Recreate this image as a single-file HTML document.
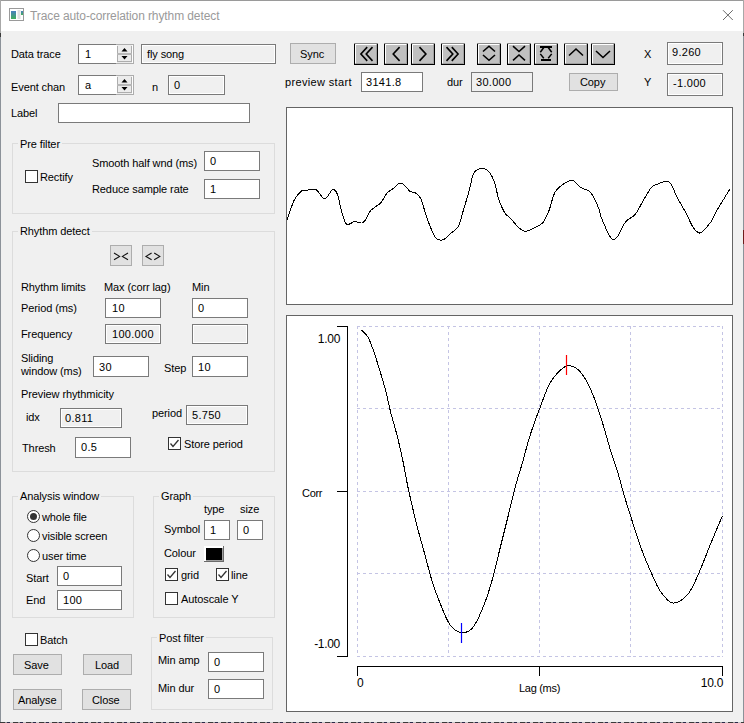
<!DOCTYPE html>
<html><head><meta charset="utf-8">
<style>
*{margin:0;padding:0;box-sizing:border-box}
html,body{width:744px;height:723px;overflow:hidden;background:#f0f0f0}
body{position:relative;font-family:"Liberation Sans",sans-serif;font-size:11px;color:#000}
.a{position:absolute}
.t{position:absolute;white-space:nowrap;line-height:12px;letter-spacing:-0.1px}
.ed{position:absolute;background:#fff;border:1px solid #7a7a7a}
.ro{position:absolute;background:#f0f0f0;border:1px solid #7a7a7a;box-shadow:inset 0 0 0 1px #fff}
.btn{position:absolute;background:#e1e1e1;border:1px solid #adadad}
.cb3{position:absolute;background:#c0c0c0;border:1px solid #000;border-top-color:#a0a0a0;box-shadow:inset 1px 1px 0 #fff}
.grp{position:absolute;border:1px solid #dcdcdc}
.cb{position:absolute;width:13px;height:13px;border:1px solid #333;background:#fff}
.rb{position:absolute;width:13px;height:13px;border:1px solid #333;background:#fff;border-radius:50%}
.lbl{position:absolute;background:#f0f0f0;padding:0 2px}
svg{position:absolute;left:0;top:0}
.g{letter-spacing:-0.3px}
.n{letter-spacing:0.3px}
.g2{font-size:12px;letter-spacing:-0.3px}
</style></head><body>
<!-- window frame -->
<div class="a" style="left:0;top:0;width:744px;height:1px;background:#9a9a9a"></div>
<div class="a" style="left:0;top:0;width:1px;height:723px;background:linear-gradient(#a8a8a8 0 33px,#3a3a3a 33px 37px,#8c9299 37px)"></div>
<div class="a" style="left:743px;top:0;width:1px;height:723px;background:linear-gradient(#a8a8a8 0 33px,#3a3a3a 33px 36px,#8c9299 36px)"></div>
<div class="a" style="left:743px;top:230px;width:1px;height:14px;background:#6e1c1c"></div>
<div class="a" style="left:1px;top:1px;width:742px;height:30px;background:#fff"></div>
<div class="a" style="left:0;top:722px;width:744px;height:1px;background:repeating-linear-gradient(90deg,#3a3a3a 0 5px,#9a9a9a 5px 7px,#2a2a4a 7px 10px,#c8c8c8 10px 13px)"></div>
<!-- title -->
<svg width="30" height="30" style="left:0;top:0">
 <defs><linearGradient id="ig" x1="0" y1="0" x2="0" y2="1"><stop offset="0" stop-color="#4a7fc0"/><stop offset="1" stop-color="#3fae5a"/></linearGradient></defs>
 <rect x="9.5" y="8.5" width="14" height="12" fill="#fff" stroke="#9a9a9a"/>
 <rect x="11" y="11" width="5" height="8" fill="url(#ig)"/>
 <rect x="17.5" y="10" width="3" height="9" fill="#e0e0e0"/>
 <rect x="21" y="11" width="2" height="4" fill="url(#ig)"/>
</svg>
<div class="t" style="left:30px;top:10px;font-size:12px;color:#9a9a9a;letter-spacing:-0.1px">Trace auto-correlation rhythm detect</div>
<svg width="20" height="20" style="left:718px;top:5px"><path d="M5 5.2L14.8 15M14.8 5.2L5 15" stroke="#6a6a6a" stroke-width="1"/></svg>

<!-- row 1 -->
<div class="t" style="left:11px;top:48px">Data trace</div>
<svg width="60" height="22" style="left:76px;top:42px" shape-rendering="crispEdges">
<rect x="2.5" y="2.5" width="55" height="19" fill="#fff" stroke="#7a7a7a"/>
<path d="M40 2.5H57.5V21.5H40" fill="none" stroke="#adadad"/>
<rect x="41" y="3" width="15" height="18" fill="#ececec"/>
<path d="M41.5 4V20M55.5 4V20M41 19.5H56" fill="none" stroke="#adadad"/>
<rect x="41" y="11" width="15" height="2" fill="#b8b8b8"/>
<path d="M45.5 9.5L48.5 6L51.5 9.5Z M45.5 14L48.5 17.5L51.5 14Z" fill="#000" shape-rendering="auto"/>
</svg>
<div class="t n" style="left:85px;top:48px">1</div>
<div class="ro" style="left:141px;top:44px;width:135px;height:20px"></div>
<div class="t" style="left:147px;top:48px">fly song</div>
<div class="btn" style="left:290px;top:43px;width:46px;height:21px"></div>
<div class="t" style="left:300px;top:48px">Sync</div>

<!-- row 2 -->
<div class="t" style="left:11px;top:81px">Event chan</div>
<svg width="60" height="22" style="left:76px;top:73px" shape-rendering="crispEdges">
<rect x="2.5" y="2.5" width="55" height="19" fill="#fff" stroke="#7a7a7a"/>
<path d="M40 2.5H57.5V21.5H40" fill="none" stroke="#adadad"/>
<rect x="41" y="3" width="15" height="18" fill="#ececec"/>
<path d="M41.5 4V20M55.5 4V20M41 19.5H56" fill="none" stroke="#adadad"/>
<rect x="41" y="11" width="15" height="2" fill="#b8b8b8"/>
<path d="M45.5 9.5L48.5 6L51.5 9.5Z M45.5 14L48.5 17.5L51.5 14Z" fill="#000" shape-rendering="auto"/>
</svg>
<div class="t" style="left:85px;top:79px">a</div>
<div class="t" style="left:152px;top:81px">n</div>
<div class="ro" style="left:168px;top:75px;width:57px;height:20px"></div>
<div class="t n" style="left:174px;top:79px">0</div>
<div class="t" style="left:285px;top:76px;letter-spacing:0.35px">preview start</div>
<div class="ed" style="left:361px;top:72px;width:62px;height:20px"></div>
<div class="t n" style="left:366px;top:76px">3141.8</div>
<div class="t" style="left:447px;top:76px">dur</div>
<div class="ro" style="left:471px;top:72px;width:62px;height:20px;box-shadow:none"></div>
<div class="t n" style="left:476px;top:76px">30.000</div>
<div class="btn" style="left:569px;top:73px;width:49px;height:18px"></div>
<div class="t" style="left:580px;top:76px">Copy</div>

<!-- row 3 -->
<div class="t" style="left:11px;top:107px">Label</div>
<div class="ed" style="left:58px;top:103px;width:192px;height:20px"></div>

<!-- X Y -->
<div class="t" style="left:644px;top:48px">X</div>
<div class="ro" style="left:667px;top:42px;width:56px;height:23px"></div>
<div class="t n" style="left:672px;top:46px">9.260</div>
<div class="t" style="left:644px;top:76px">Y</div>
<div class="ro" style="left:667px;top:73px;width:56px;height:23px"></div>
<div class="t n" style="left:673px;top:77px">-1.000</div>

<!-- nav buttons -->

<svg width="300" height="30" style="left:350px;top:40px">
<g transform="translate(4,3)"><rect x="0.5" y="0.5" width="23" height="21" fill="#c0c0c0" stroke="#000"/><path d="M0 0.5H24" stroke="#8a8a8a"/><path d="M1.5 20V1.5H22" fill="none" stroke="#fff"/><path d="M2 20.5H22.5V2" fill="none" stroke="#a0a0a0"/><path d="M13.2 4.1L6.9 11L13.2 17.9M18.5 4.1L12.2 11L18.5 17.9" fill="none" stroke="#000" stroke-width="1.6"/></g>
<g transform="translate(34,3)"><rect x="0.5" y="0.5" width="23" height="21" fill="#c0c0c0" stroke="#000"/><path d="M0 0.5H24" stroke="#8a8a8a"/><path d="M1.5 20V1.5H22" fill="none" stroke="#fff"/><path d="M2 20.5H22.5V2" fill="none" stroke="#a0a0a0"/><path d="M15.6 4.1L9.2 11L15.6 17.9" fill="none" stroke="#000" stroke-width="1.6"/></g>
<g transform="translate(61,3)"><rect x="0.5" y="0.5" width="23" height="21" fill="#c0c0c0" stroke="#000"/><path d="M0 0.5H24" stroke="#8a8a8a"/><path d="M1.5 20V1.5H22" fill="none" stroke="#fff"/><path d="M2 20.5H22.5V2" fill="none" stroke="#a0a0a0"/><path d="M8.5 4.1L14.9 11L8.5 17.9" fill="none" stroke="#000" stroke-width="1.6"/></g>
<g transform="translate(91,3)"><rect x="0.5" y="0.5" width="23" height="21" fill="#c0c0c0" stroke="#000"/><path d="M0 0.5H24" stroke="#8a8a8a"/><path d="M1.5 20V1.5H22" fill="none" stroke="#fff"/><path d="M2 20.5H22.5V2" fill="none" stroke="#a0a0a0"/><path d="M5.5 4.1L11.8 11L5.5 17.9M10.8 4.1L17.1 11L10.8 17.9" fill="none" stroke="#000" stroke-width="1.6"/></g>
<g transform="translate(127,3)"><rect x="0.5" y="0.5" width="23" height="21" fill="#c0c0c0" stroke="#000"/><path d="M0 0.5H24" stroke="#8a8a8a"/><path d="M1.5 20V1.5H22" fill="none" stroke="#fff"/><path d="M2 20.5H22.5V2" fill="none" stroke="#a0a0a0"/><path d="M6 8.5L12 3.2L18 8.5M6 12L12 17.3L18 12" fill="none" stroke="#000" stroke-width="1.6"/></g>
<g transform="translate(157,3)"><rect x="0.5" y="0.5" width="23" height="21" fill="#c0c0c0" stroke="#000"/><path d="M0 0.5H24" stroke="#8a8a8a"/><path d="M1.5 20V1.5H22" fill="none" stroke="#fff"/><path d="M2 20.5H22.5V2" fill="none" stroke="#a0a0a0"/><path d="M6 3.2L12 8.5L18 3.2M6 17.3L12 12L18 17.3" fill="none" stroke="#000" stroke-width="1.6"/></g>
<g transform="translate(184,3)"><rect x="0.5" y="0.5" width="23" height="21" fill="#c0c0c0" stroke="#000"/><path d="M0 0.5H24" stroke="#8a8a8a"/><path d="M1.5 20V1.5H22" fill="none" stroke="#fff"/><path d="M2 20.5H22.5V2" fill="none" stroke="#a0a0a0"/><path d="M9.8 4.5L6.3 9.3M14.2 4.5L17.7 9.3M6.3 10.9L9.8 15.2M17.7 10.9L14.2 15.2" fill="none" stroke="#000" stroke-width="1.5"/><rect x="6" y="3" width="12" height="2" fill="#000"/><rect x="7" y="16" width="10" height="2" fill="#000"/></g>
<g transform="translate(214,3)"><rect x="0.5" y="0.5" width="23" height="21" fill="#c0c0c0" stroke="#000"/><path d="M0 0.5H24" stroke="#8a8a8a"/><path d="M1.5 20V1.5H22" fill="none" stroke="#fff"/><path d="M2 20.5H22.5V2" fill="none" stroke="#a0a0a0"/><path d="M5 12.5L12 6L19 12.5" fill="none" stroke="#000" stroke-width="1.6"/></g>
<g transform="translate(241,3)"><rect x="0.5" y="0.5" width="23" height="21" fill="#c0c0c0" stroke="#000"/><path d="M0 0.5H24" stroke="#8a8a8a"/><path d="M1.5 20V1.5H22" fill="none" stroke="#fff"/><path d="M2 20.5H22.5V2" fill="none" stroke="#a0a0a0"/><path d="M5 8L12 14.5L19 8" fill="none" stroke="#000" stroke-width="1.6"/></g>
</svg>

<!-- Pre filter -->
<div class="grp" style="left:12px;top:143px;width:263px;height:71px"></div>
<div class="t lbl" style="left:18px;top:138px">Pre filter</div>
<div class="cb" style="left:25px;top:170px"></div>
<div class="t" style="left:40px;top:171px">Rectify</div>
<div class="t" style="left:92px;top:157px">Smooth half wnd (ms)</div>
<div class="ed" style="left:204px;top:151px;width:56px;height:20px"></div>
<div class="t n" style="left:210px;top:155px">0</div>
<div class="t" style="left:92px;top:183px">Reduce sample rate</div>
<div class="ed" style="left:204px;top:179px;width:56px;height:20px"></div>
<div class="t n" style="left:210px;top:183px">1</div>

<!-- Rhythm detect -->
<div class="grp" style="left:12px;top:231px;width:263px;height:241px"></div>
<div class="t lbl" style="left:18px;top:225px">Rhythm detect</div>
<div class="btn" style="left:110px;top:245px;width:22px;height:21px"></div>
<svg width="22" height="21" style="left:110px;top:245px"><path d="M4 8L9.6 11.4L4 14.8M18 8L12.4 11.4L18 14.8" fill="none" stroke="#111" stroke-width="1.1"/></svg>
<div class="btn" style="left:142px;top:245px;width:22px;height:21px"></div>
<svg width="22" height="21" style="left:142px;top:245px"><path d="M9.6 8L4 11.4L9.6 14.8M12.2 8L17.8 11.4L12.2 14.8" fill="none" stroke="#111" stroke-width="1.1"/></svg>
<div class="t" style="left:21px;top:281px">Rhythm limits</div>
<div class="t" style="left:104px;top:281px">Max (corr lag)</div>
<div class="t" style="left:192px;top:281px">Min</div>
<div class="t" style="left:21px;top:302px">Period (ms)</div>
<div class="ed" style="left:105px;top:298px;width:56px;height:20px"></div>
<div class="t n" style="left:112px;top:302px">10</div>
<div class="ed" style="left:192px;top:298px;width:56px;height:20px"></div>
<div class="t n" style="left:198px;top:302px">0</div>
<div class="t" style="left:21px;top:328px">Frequency</div>
<div class="ro" style="left:105px;top:324px;width:56px;height:20px"></div>
<div class="t n" style="left:112px;top:328px">100.000</div>
<div class="ro" style="left:192px;top:324px;width:56px;height:20px"></div>
<div class="t" style="left:21px;top:352px">Sliding</div>
<div class="t" style="left:21px;top:365px">window (ms)</div>
<div class="ed" style="left:93px;top:356px;width:56px;height:21px"></div>
<div class="t n" style="left:99px;top:361px">30</div>
<div class="t" style="left:164px;top:362px">Step</div>
<div class="ed" style="left:192px;top:356px;width:56px;height:21px"></div>
<div class="t n" style="left:198px;top:361px">10</div>
<div class="t" style="left:21px;top:388px">Preview rhythmicity</div>
<div class="t" style="left:26px;top:411px">idx</div>
<div class="ro" style="left:60px;top:408px;width:62px;height:20px"></div>
<div class="t n" style="left:65px;top:412px">0.811</div>
<div class="t" style="left:152px;top:407px">period</div>
<div class="ro" style="left:186px;top:405px;width:62px;height:20px"></div>
<div class="t n" style="left:192px;top:409px">5.750</div>
<div class="t" style="left:22px;top:442px">Thresh</div>
<div class="ed" style="left:75px;top:437px;width:56px;height:21px"></div>
<div class="t n" style="left:81px;top:441px">0.5</div>
<div class="cb" style="left:168px;top:437px"></div>
<svg width="13" height="13" style="left:168px;top:437px"><path d="M2.5 6.5L5 9.5L10.5 3" fill="none" stroke="#333" stroke-width="1.3"/></svg>
<div class="t" style="left:184px;top:438px">Store period</div>

<!-- Analysis window -->
<div class="grp" style="left:12px;top:496px;width:122px;height:122px"></div>
<div class="t lbl" style="left:18px;top:490px">Analysis window</div>
<div class="rb" style="left:27px;top:510px"></div>
<div class="a" style="left:30px;top:513px;width:7px;height:7px;border-radius:50%;background:#333"></div>
<div class="t" style="left:42px;top:511px">whole file</div>
<div class="rb" style="left:27px;top:529px"></div>
<div class="t" style="left:42px;top:530px">visible screen</div>
<div class="rb" style="left:27px;top:549px"></div>
<div class="t" style="left:42px;top:550px">user time</div>
<div class="t" style="left:26px;top:572px">Start</div>
<div class="ed" style="left:57px;top:566px;width:65px;height:20px"></div>
<div class="t n" style="left:63px;top:570px">0</div>
<div class="t" style="left:26px;top:594px">End</div>
<div class="ed" style="left:57px;top:590px;width:65px;height:20px"></div>
<div class="t n" style="left:63px;top:594px">100</div>

<!-- Graph -->
<div class="grp" style="left:153px;top:496px;width:122px;height:122px"></div>
<div class="t lbl" style="left:159px;top:490px">Graph</div>
<div class="t" style="left:204px;top:503px">type</div>
<div class="t" style="left:240px;top:503px">size</div>
<div class="t" style="left:164px;top:523px">Symbol</div>
<div class="ed" style="left:204px;top:520px;width:26px;height:20px"></div>
<div class="t n" style="left:210px;top:524px">1</div>
<div class="ed" style="left:237px;top:520px;width:26px;height:20px"></div>
<div class="t n" style="left:243px;top:524px">0</div>
<div class="t" style="left:164px;top:547px">Colour</div>
<svg width="20" height="16" style="left:204px;top:546px" shape-rendering="crispEdges"><rect x="0" y="0" width="20" height="16" fill="#fff"/><rect x="0" y="15" width="20" height="1" fill="#6a6a6a"/><rect x="19" y="0" width="1" height="16" fill="#6a6a6a"/><rect x="2" y="14" width="17" height="1" fill="#a0a0a0"/><rect x="18" y="2" width="1" height="13" fill="#a0a0a0"/><rect x="2" y="2" width="16" height="12" fill="#000"/></svg>
<div class="cb" style="left:165px;top:568px"></div>
<svg width="13" height="13" style="left:165px;top:568px"><path d="M2.5 6.5L5 9.5L10.5 3" fill="none" stroke="#333" stroke-width="1.3"/></svg>
<div class="t" style="left:181px;top:569px">grid</div>
<div class="cb" style="left:216px;top:568px"></div>
<svg width="13" height="13" style="left:216px;top:568px"><path d="M2.5 6.5L5 9.5L10.5 3" fill="none" stroke="#333" stroke-width="1.3"/></svg>
<div class="t" style="left:231px;top:569px">line</div>
<div class="cb" style="left:165px;top:592px"></div>
<div class="t" style="left:181px;top:593px">Autoscale Y</div>

<!-- bottom -->
<div class="cb" style="left:25px;top:633px"></div>
<div class="t" style="left:40px;top:634px">Batch</div>
<div class="btn" style="left:13px;top:654px;width:49px;height:21px"></div>
<div class="t" style="left:24px;top:659px">Save</div>
<div class="btn" style="left:83px;top:654px;width:49px;height:21px"></div>
<div class="t" style="left:95px;top:659px">Load</div>
<div class="btn" style="left:13px;top:689px;width:49px;height:21px"></div>
<div class="t" style="left:18px;top:694px">Analyse</div>
<div class="btn" style="left:82px;top:689px;width:49px;height:21px"></div>
<div class="t" style="left:92px;top:694px">Close</div>

<!-- Post filter -->
<div class="grp" style="left:151px;top:637px;width:122px;height:73px"></div>
<div class="t lbl" style="left:157px;top:632px">Post filter</div>
<div class="t" style="left:158px;top:654px">Min amp</div>
<div class="ed" style="left:208px;top:652px;width:56px;height:20px"></div>
<div class="t n" style="left:214px;top:656px">0</div>
<div class="t" style="left:158px;top:682px">Min dur</div>
<div class="ed" style="left:208px;top:679px;width:56px;height:20px"></div>
<div class="t n" style="left:214px;top:683px">0</div>

<!-- graphs -->
<svg width="744" height="723" style="left:0;top:0">
<rect x="286.5" y="107.5" width="446" height="197" fill="#fff" stroke="#646464"/>
<rect x="286.5" y="315.5" width="446" height="396" fill="#fff" stroke="#646464"/>
<path d="M287.0 219.6C288.2 216.4 291.8 205.1 294.1 200.4C296.5 195.7 299.1 193.0 301.1 191.3C303.1 189.6 303.9 190.6 306.2 190.3C308.5 190.0 313.0 188.8 315.2 189.3C317.4 189.8 317.8 191.7 319.3 193.3C320.8 194.9 322.8 198.5 324.3 198.8C325.8 199.2 326.9 197.0 328.3 195.4C329.7 193.8 331.3 189.5 332.8 189.3C334.3 189.1 336.0 190.9 337.4 194.4C338.8 197.9 339.9 205.5 341.4 210.5C342.9 215.5 344.3 222.3 346.5 224.2C348.7 226.0 352.0 221.8 354.5 221.6C357.0 221.4 359.8 223.3 361.6 223.0C363.5 222.7 364.1 221.7 365.6 219.6C367.1 217.5 368.2 213.3 370.7 210.5C373.2 207.7 378.1 205.7 380.8 202.8C383.5 199.9 384.5 195.9 386.8 193.3C389.1 190.7 392.9 189.0 394.9 187.3C396.9 185.6 397.6 183.9 398.9 183.3C400.2 182.7 401.0 182.6 402.9 183.9C404.8 185.2 408.0 189.8 410.0 191.3C412.0 192.8 413.2 191.5 415.0 192.7C416.8 193.9 418.7 194.1 420.7 198.4C422.7 202.7 424.7 212.1 427.1 218.5C429.5 224.9 432.9 233.5 435.2 237.1C437.5 240.7 439.5 239.8 441.1 240.1C442.8 240.4 443.6 239.8 445.1 238.7C446.6 237.6 448.0 235.7 450.2 233.7C452.4 231.7 456.0 230.5 458.2 226.6C460.4 222.7 461.4 216.6 463.3 210.5C465.2 204.4 467.6 196.4 469.3 190.3C471.0 184.2 471.5 177.8 473.3 174.2C475.1 170.6 477.9 169.0 480.4 168.5C482.9 168.0 486.1 168.9 488.5 171.2C490.9 173.5 492.8 177.8 494.5 182.3C496.2 186.8 496.8 193.4 498.5 198.4C500.2 203.4 502.6 209.2 504.6 212.5C506.6 215.8 508.2 216.0 510.6 218.5C513.0 221.0 516.2 225.5 518.7 227.6C521.2 229.7 523.1 231.3 525.8 231.3C528.5 231.3 531.9 229.1 534.8 227.6C537.6 226.1 540.5 225.4 542.9 222.6C545.3 219.8 547.0 215.6 549.0 210.5C551.0 205.4 552.6 196.7 555.0 192.3C557.4 187.9 560.2 186.3 563.1 184.3C566.0 182.3 569.4 179.9 572.1 180.2C574.8 180.5 577.5 185.0 579.2 186.3C580.9 187.7 580.9 187.5 582.5 188.3C584.1 189.1 587.1 189.6 588.9 190.9C590.7 192.2 591.6 193.3 593.2 196.2C594.8 199.1 597.2 204.3 598.6 208.1C600.0 211.9 599.6 213.7 601.8 218.8C603.9 223.9 608.8 235.7 611.5 238.6C614.2 241.5 615.6 238.8 617.9 236.0C620.2 233.2 622.6 225.6 625.5 222.0C628.4 218.4 632.2 217.9 635.1 214.5C638.0 211.1 640.0 206.1 642.7 201.6C645.4 197.1 648.8 190.5 651.3 187.6C653.8 184.7 655.4 185.0 657.7 184.0C660.0 183.0 663.1 181.7 665.2 181.6C667.4 181.5 668.6 180.7 670.6 183.3C672.6 185.9 674.6 192.5 677.1 197.3C679.6 202.2 683.0 207.4 685.7 212.4C688.4 217.4 690.7 224.0 693.2 227.4C695.7 230.8 697.7 233.9 700.7 232.8C703.8 231.7 709.0 224.4 711.5 221.0C714.0 217.6 712.8 217.7 715.8 212.4C718.8 207.1 727.5 193.0 729.8 189.1" fill="none" stroke="#000" stroke-width="1" shape-rendering="crispEdges"/>
<g stroke="#c4c4e4" stroke-dasharray="3 3" shape-rendering="crispEdges"><path d="M357.5 326V657"/><path d="M448.5 326V657"/><path d="M539.5 326V657"/><path d="M630.5 326V657"/><path d="M722.5 326V657"/><path d="M357 326.5H723"/><path d="M357 408.5H723"/><path d="M357 491.5H723"/><path d="M357 573.5H723"/><path d="M357 656.5H723"/></g>
<g stroke="#000" fill="none" shape-rendering="crispEdges"><path d="M337 326.5H347.5V656.5H337M337 491.5H347"/><path d="M357.5 676V666.5H722.5V676M539.5 666V676"/></g>
<path d="M361.3 329.9C362.4 331.0 365.6 333.1 367.6 336.5C369.6 339.9 371.5 345.1 373.5 350.6C375.5 356.1 377.4 362.9 379.4 369.4C381.4 375.8 383.4 381.9 385.3 389.3C387.2 396.7 389.2 406.4 391.1 414.0C393.1 421.6 395.0 427.4 397.0 435.2C399.0 443.0 401.0 452.1 402.9 461.0C404.8 469.9 405.9 477.8 408.3 488.8C410.7 499.9 414.6 516.3 417.4 527.3C420.2 538.3 422.4 545.6 424.9 554.7C427.4 563.8 429.7 573.6 432.4 582.1C435.1 590.6 438.2 598.7 441.1 605.8C444.0 612.9 446.5 620.0 449.8 624.5C453.1 629.0 457.3 631.9 461.0 632.5C464.7 633.1 468.7 632.0 472.2 628.2C475.7 624.4 479.1 616.8 482.2 609.5C485.3 602.2 488.0 594.6 490.9 584.6C493.8 574.6 496.8 561.4 499.7 549.8C502.6 538.2 505.7 525.7 508.4 514.9C511.1 504.1 513.5 493.5 515.8 485.0C518.1 476.5 519.9 471.5 522.1 463.9C524.3 456.3 526.8 446.3 528.8 439.5C530.8 432.7 532.3 428.6 534.3 422.9C536.3 417.2 538.5 411.6 540.9 405.3C543.3 399.0 546.1 390.5 548.7 385.3C551.3 380.1 553.5 377.5 556.4 374.3C559.3 371.1 563.1 367.1 566.4 366.1C569.7 365.1 573.2 366.2 576.3 368.3C579.4 370.4 582.2 373.8 585.2 378.7C588.2 383.6 591.0 389.9 594.0 397.5C597.0 405.1 600.1 415.2 602.9 424.1C605.7 433.0 608.2 442.9 610.6 450.6C613.0 458.3 614.8 462.6 617.2 470.5C619.6 478.4 622.3 489.2 625.0 498.2C627.7 507.2 630.5 515.8 633.2 524.3C636.0 532.8 638.5 541.1 641.5 549.2C644.5 557.3 648.0 565.6 651.2 572.7C654.4 579.9 657.2 587.0 660.9 592.1C664.6 597.2 668.7 602.9 673.3 603.1C677.9 603.3 684.1 598.7 688.5 593.4C692.9 588.1 695.9 579.6 699.6 571.3C703.3 563.0 706.9 552.8 710.7 543.6C714.5 534.4 720.4 520.6 722.3 516.0" fill="none" stroke="#000" stroke-width="1" shape-rendering="crispEdges"/>
<path d="M566.5 355V375" stroke="#f00" stroke-width="1.2"/>
<path d="M461.5 623V643" stroke="#00f" stroke-width="1.2"/>
</svg>
<div class="t g2" style="left:290px;width:50px;text-align:right;top:333px">1.00</div>
<div class="t g" style="left:302px;top:487px">Corr</div>
<div class="t g2" style="left:290px;width:50px;text-align:right;top:638px">-1.00</div>
<div class="t g2" style="left:357px;top:677px">0</div>
<div class="t g" style="left:519px;top:682px">Lag (ms)</div>
<div class="t g2" style="left:673px;width:50px;text-align:right;top:677px">10.0</div>
</body></html>
